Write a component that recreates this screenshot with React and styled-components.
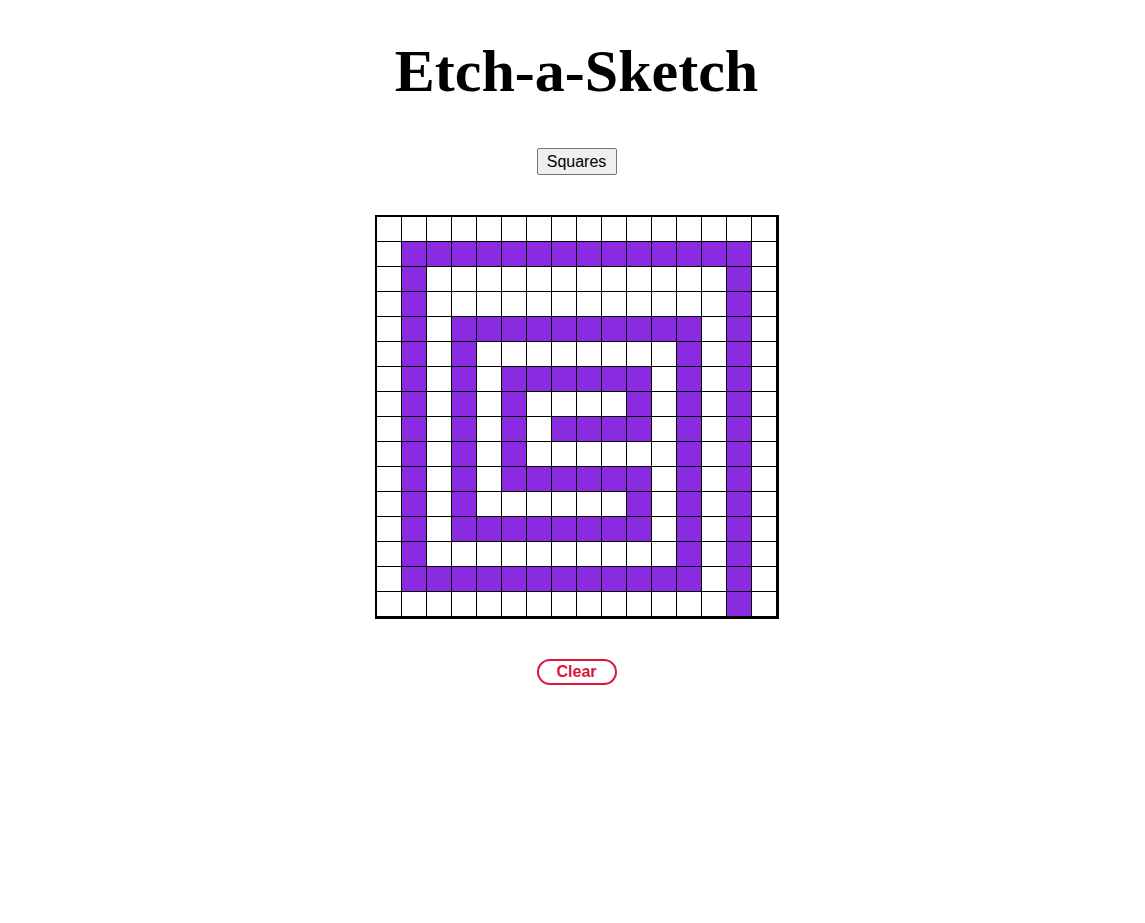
import React from "react";
import styled, { createGlobalStyle } from "styled-components";

const GlobalStyle = createGlobalStyle`
  body {
    margin: 8px 8px 8px 16px;
    background: #ffffff;
    font-family: "Liberation Serif", "Times New Roman", serif;
  }
`;

const Page = styled.div`
  display: flex;
  flex-direction: column;
  align-items: center;
`;

const Title = styled.h1`
  font-family: "Liberation Serif", "Times New Roman", serif;
  font-size: 60px;
  font-weight: bold;
  margin: 29px 0 42px;
  line-height: normal;
  color: #000;
`;

const SizeButton = styled.button`
  width: 80px;
  height: 27px;
  padding: 0;
  font-family: "Liberation Sans", Arial, sans-serif;
  font-size: 16px;
  color: #000;
  background: #efefef;
  border: 1px solid #767676;
  border-radius: 2px;
  cursor: pointer;
`;

const Board = styled.div`
  margin-top: 40px;
  display: grid;
  grid-template-columns: repeat(16, 25px);
  grid-template-rows: repeat(16, 25px);
  border: 2px solid #000;
  width: max-content;
`;

const Cell = styled.div`
  box-sizing: border-box;
  width: 25px;
  height: 25px;
  border-right: 1px solid #000;
  border-bottom: 1px solid #000;
  background: ${(p) => (p.$on ? "#8a2be2" : "#ffffff")};
`;

const ClearButton = styled.button`
  margin-top: 40px;
  width: 80px;
  height: 26px;
  padding: 0;
  font-family: "Liberation Sans", Arial, sans-serif;
  font-size: 16px;
  font-weight: bold;
  color: #dc143c;
  background: #ffffff;
  border: 2px solid #dc143c;
  border-radius: 13px;
  cursor: pointer;
`;

const pattern = [
  "................",
  ".##############.",
  ".#............#.",
  ".#............#.",
  ".#.##########.#.",
  ".#.#........#.#.",
  ".#.#.######.#.#.",
  ".#.#.#....#.#.#.",
  ".#.#.#.####.#.#.",
  ".#.#.#......#.#.",
  ".#.#.######.#.#.",
  ".#.#......#.#.#.",
  ".#.########.#.#.",
  ".#..........#.#.",
  ".############.#.",
  "..............#.",
];

export default function App() {
  return (
    <>
      <GlobalStyle />
      <Page>
        <Title>Etch-a-Sketch</Title>
        <SizeButton>Squares</SizeButton>
        <Board>
          {pattern.map((row, r) =>
            row.split("").map((c, i) => <Cell key={`${r}-${i}`} $on={c === "#"} />)
          )}
        </Board>
        <ClearButton>Clear</ClearButton>
      </Page>
    </>
  );
}
